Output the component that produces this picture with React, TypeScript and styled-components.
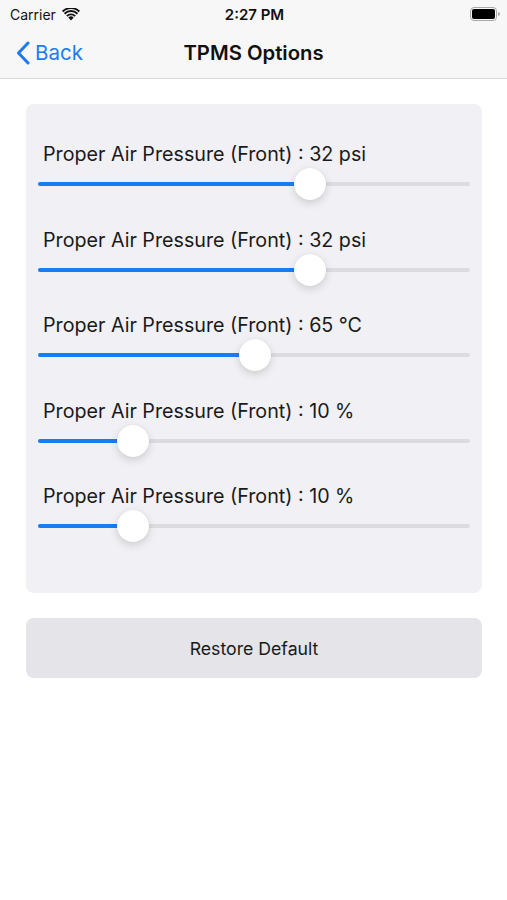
import React from "react";
import styled, { createGlobalStyle } from "styled-components";

const Global = createGlobalStyle`
  html, body { margin: 0; padding: 0; background: #ffffff; }
  body { font-family: Inter, "Liberation Sans", Roboto, sans-serif; -webkit-font-smoothing: antialiased; }
`;

const Screen = styled.div`
  width: 507px;
  height: 900px;
  background: #ffffff;
  display: flex;
  flex-direction: column;
`;

const Header = styled.div`
  background: #f7f7f7;
  border-bottom: 1px solid #d9d9d9;
`;

const StatusBar = styled.div`
  height: 28px;
  display: grid;
  grid-template-columns: 1fr auto 1fr;
  align-items: center;
  padding: 0 6px 0 10px;
  box-sizing: border-box;
`;

const Carrier = styled.div`
  display: flex;
  align-items: center;
  gap: 6px;
  font-size: 14px;
  color: #111;
`;

const Time = styled.div`
  font-size: 15px;
  font-weight: 600;
  color: #111;
  margin-left: -2px;
`;

const BatteryWrap = styled.div`
  display: flex;
  justify-content: flex-end;
  align-items: center;
`;

const NavBar = styled.div`
  height: 50px;
  box-sizing: border-box;
  display: grid;
  grid-template-columns: 1fr auto 1fr;
  align-items: center;
  padding: 0 16px 1px 16px;
`;

const BackButton = styled.div`
  display: flex;
  align-items: center;
  gap: 5px;
  color: #1b7cf2;
  font-size: 20.5px;
`;

const Title = styled.div`
  font-size: 20.3px;
  font-weight: 600;
  color: #111;
`;

const Content = styled.div`
  padding: 25px 25px 0 26px;
  display: flex;
  flex-direction: column;
  gap: 25px;
`;

const Card = styled.div`
  background: #f0f0f5;
  border-radius: 8px;
  padding: 38px 12px 51px 12px;
  display: flex;
  flex-direction: column;
  gap: 27.5px;
`;

const Row = styled.div`
  display: flex;
  flex-direction: column;
  gap: 2px;
`;

const Label = styled.div`
  font-size: 19.7px;
  line-height: 24px;
  color: #1a1a1a;
  padding-left: 5px;
`;

const Slider = styled.div`
  position: relative;
  height: 32px;
  display: flex;
  align-items: center;
`;

const TrackBase = styled.div`
  flex: 1;
  height: 4px;
  border-radius: 2px;
  background: #dcdce0;
  overflow: hidden;
`;

const Fill = styled.div`
  height: 100%;
  background: #1a7cf2;
`;

const Thumb = styled.div`
  position: absolute;
  top: 0;
  width: 32px;
  height: 32px;
  margin-left: -16px;
  border-radius: 50%;
  background: #ffffff;
  box-shadow: 0 3px 8px rgba(0, 0, 0, 0.15), 0 0 1px rgba(0, 0, 0, 0.1);
`;

const RestoreButton = styled.div`
  height: 60px;
  border-radius: 8px;
  background: #e4e4e9;
  display: flex;
  align-items: center;
  justify-content: center;
  font-size: 17.7px;
  color: #1a1a1a;
`;

const rows = [
  { text: "Proper Air Pressure (Front) : 32 psi", pct: 63 },
  { text: "Proper Air Pressure (Front) : 32 psi", pct: 63 },
  { text: "Proper Air Pressure (Front) : 65 °C", pct: 50.2 },
  { text: "Proper Air Pressure (Front) : 10 %", pct: 22 },
  { text: "Proper Air Pressure (Front) : 10 %", pct: 22 },
];

const Wifi = () => (
  <svg width="18" height="13" viewBox="0 0 18 13">
    <path d="M9 12.5 L6.3 9.6 A3.9 3.9 0 0 1 11.7 9.6 Z" fill="#111" />
    <path d="M4.2 7.4 A6.8 6.8 0 0 1 13.8 7.4 L12.5 8.8 A4.9 4.9 0 0 0 5.5 8.8 Z" fill="#111" />
    <path d="M1.9 5.0 A10 10 0 0 1 16.1 5.0 L14.8 6.4 A8.1 8.1 0 0 0 3.2 6.4 Z" fill="#111" />
    <path d="M0 2.8 A12.8 12.8 0 0 1 18 2.8 L16.7 4.2 A11 11 0 0 0 1.3 4.2 Z" fill="#111" />
  </svg>
);

const Battery = () => (
  <svg width="31" height="14" viewBox="0 0 31 14">
    <rect x="0.5" y="0.5" width="26" height="13" rx="3.5" fill="none" stroke="#a8a8a8" />
    <rect x="2" y="2" width="23" height="10" rx="2" fill="#000" />
    <path d="M28 5 Q30 5.5 30 7 Q30 8.5 28 9 Z" fill="#a8a8a8" />
  </svg>
);

const Chevron = () => (
  <svg width="14" height="24" viewBox="0 0 14 24">
    <path d="M12 2 L2.5 12 L12 22" fill="none" stroke="#1b7cf2" strokeWidth="3" strokeLinecap="round" strokeLinejoin="round" />
  </svg>
);

export default function App() {
  return (
    <>
      <Global />
      <Screen>
        <Header>
          <StatusBar>
            <Carrier>
              Carrier
              <Wifi />
            </Carrier>
            <Time>2:27 PM</Time>
            <BatteryWrap>
              <Battery />
            </BatteryWrap>
          </StatusBar>
          <NavBar>
            <BackButton>
              <Chevron />
              Back
            </BackButton>
            <Title>TPMS Options</Title>
            <div />
          </NavBar>
        </Header>
        <Content>
          <Card>
            {rows.map((r, i) => (
              <Row key={i}>
                <Label>{r.text}</Label>
                <Slider>
                  <TrackBase>
                    <Fill style={{ width: `${r.pct}%` }} />
                  </TrackBase>
                  <Thumb style={{ left: `${r.pct}%` }} />
                </Slider>
              </Row>
            ))}
          </Card>
          <RestoreButton>Restore Default</RestoreButton>
        </Content>
      </Screen>
    </>
  );
}
